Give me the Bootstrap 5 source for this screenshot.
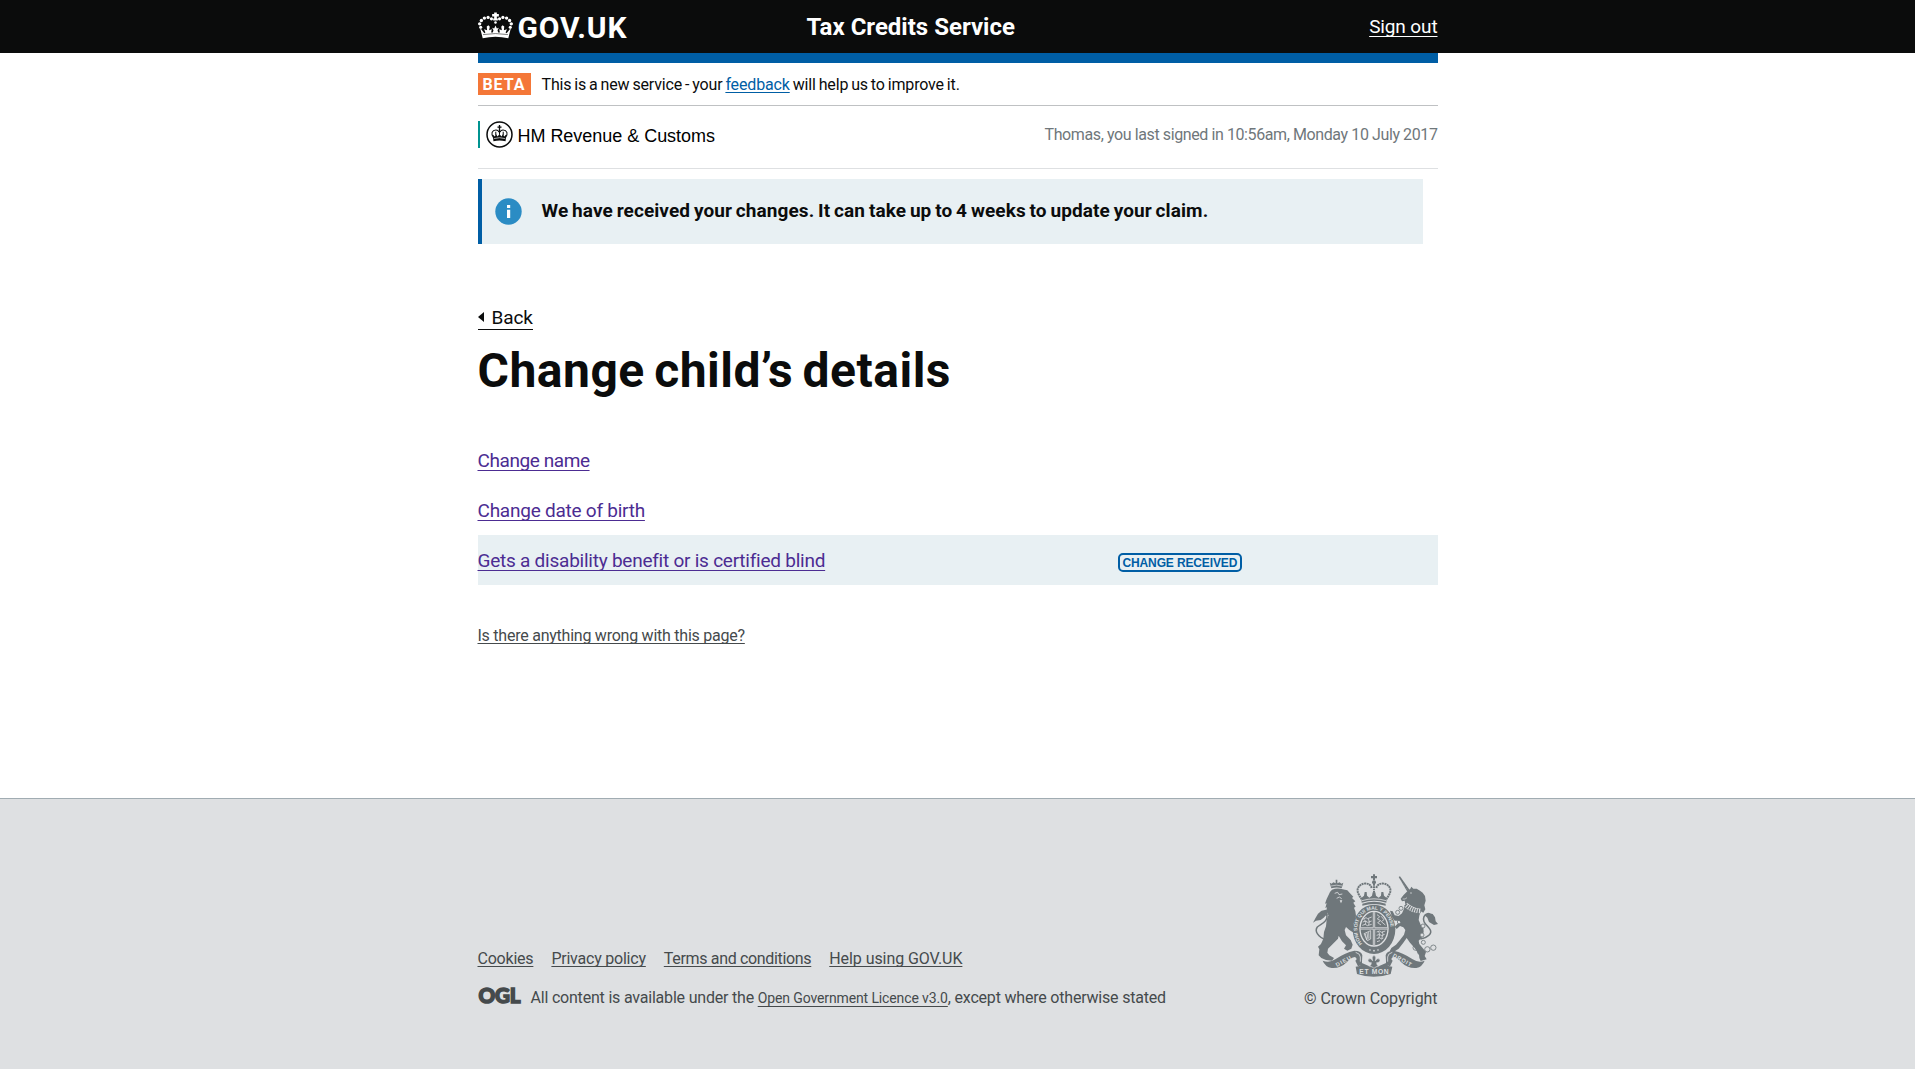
<!DOCTYPE html>
<html lang="en">
<head>
<meta charset="utf-8">
<meta name="viewport" content="width=device-width, initial-scale=1">
<title>Change child’s details – Tax Credits Service</title>
<link href="https://cdn.jsdelivr.net/npm/bootstrap@5.3.0/dist/css/bootstrap.min.css" rel="stylesheet">
<style>
  body { font-family: Roboto, "Liberation Sans", sans-serif; font-size: 16px; color: #0b0c0c; background: #fff; }
  a { text-decoration: underline; text-decoration-thickness: 1px; text-underline-offset: 3px; text-decoration-skip-ink: none; }
  .page-width { width: 960px; }
  .site-header { background: #0b0c0c; color: #fff; height: 53px; line-height: 53px; }
  .brand { width: 329px; gap: 5px; }
  .brand-name { font-size: 30px; font-weight: 700; letter-spacing: .85px; line-height: 56px; height: 53px; }
  .service-name { font-size: 24px; font-weight: 700; line-height: 55px; }
  .sign-out { font-size: 19px; letter-spacing: -.12px; color: #fff; }
  .header-bar { height: 10px; background: #005ea5; }
  .phase-banner { height: 43px; padding-top: 10px; border-bottom: 1px solid #bfc1c3; gap: 11px; }
  .phase-tag { width: 53px; height: 22px; line-height: 23px; background: #f47738; color: #fff; font-weight: 700; letter-spacing: .9px; padding-left: 5px; }
  .phase-text { line-height: 23px; letter-spacing: -.15px; word-spacing: -.9px; }
  .phase-text a { color: #005ea5; text-underline-offset: 2px; }
  .dept-row { height: 63px; padding-top: 15px; border-bottom: 1px solid #dee0e2; }
  .dept { height: 27px; border-left: 2px solid #009390; padding-left: 6px; gap: 5px; }
  .dept-name { font: 18px/31px "Liberation Sans", sans-serif; letter-spacing: -.03px; color: #000; }
  .last-login { line-height: 27px; color: #6f777b; letter-spacing: -.4px; }
  .notice { width: 945px; height: 65px; margin-top: 10px; border-left: 4px solid #005ea5; background: #e8f0f3; padding-left: 13px; gap: 20px; }
  .notice-text { font-size: 19px; line-height: 24px; padding-bottom: 2px; letter-spacing: .09px; word-spacing: -1px; }
  .back-link { margin-top: 64px; font-size: 19px; line-height: 19px; padding-bottom: 2px; border-bottom: 1px solid #0b0c0c; color: #0b0c0c; gap: 8px; letter-spacing: -.1px; }
  .page-title { font-size: 48px; font-weight: 700; line-height: 50px; letter-spacing: .5px; word-spacing: -3px; margin: 16px 0 39px; }
  .change-row { height: 50px; padding-top: 1px; line-height: 49px; font-size: 19px; }
  .change-row a { color: #4c2c92; letter-spacing: -.24px; }
  .change-row a.child-name { letter-spacing: -.42px; }
  .change-row.is-updated { background: #e8f0f3; }
  .change-row .link-cell { width: 640px; }
  .change-tag { height: 19px; margin-top: 17px; padding: 0 3px; width: 124px; border: 2px solid #005ea5; border-radius: 5px; color: #005ea5; font: 700 12px/16px "Liberation Sans", sans-serif; letter-spacing: -.13px; white-space: nowrap; }
  .page-help { margin-top: 38px; line-height: 25px; }
  .page-help a { color: #454a4c; letter-spacing: -.24px; text-underline-offset: 2px; }
  .site-footer { margin-top: 150px; height: 271px; background: #dee0e2; border-top: 1px solid #a1acb2; color: #454a4c; }
  .site-footer a { color: #454a4c; text-underline-offset: 2px; }
  .footer-inner { height: 210px; }
  .footer-links { gap: 18px; line-height: 21px; margin-bottom: 19px; letter-spacing: -.22px; }
  .footer-links .terms { letter-spacing: -.33px; }
  .footer-links .help { letter-spacing: -.07px; }
  .licence { line-height: 20px; gap: 10px; letter-spacing: -.2px; margin-bottom: 1px; }
  .licence a { font-size: 14px; letter-spacing: -.12px; text-underline-offset: 3px; }
  .ogl { margin-top: -1px; }
  .copyright { line-height: 20px; letter-spacing: -.06px; }
  .arms { margin-bottom: 12px; }
  svg { display: block; flex: none; overflow: visible; }
</style>
</head>
<body>
<header class="site-header">
  <div class="page-width mx-auto d-flex">
    <div class="brand d-flex align-items-start">
      <svg class="mt-2 pt-1" style="box-sizing:content-box" width="35" height="27" viewBox="24 38 104 80" fill="#fff">
        <path d="M72 39h8v5h6v7h-6v6h3v6h-14v-6h3v-6h-6v-7h6z"/>
        <g><circle cx="64" cy="58" r="4.8"/><circle cx="54" cy="54" r="4.8"/><circle cx="43" cy="56" r="5"/><circle cx="34" cy="63" r="5"/><circle cx="29" cy="73" r="5"/><circle cx="32" cy="83" r="4.6"/>
        <circle cx="88" cy="58" r="4.8"/><circle cx="98" cy="54" r="4.8"/><circle cx="109" cy="56" r="5"/><circle cx="118" cy="63" r="5"/><circle cx="123" cy="73" r="5"/><circle cx="120" cy="83" r="4.6"/><circle cx="76" cy="69" r="3.8"/></g>
        <path d="M30 85l13 16 3-2-4-10 9 3-1-11 5-4 4 5-2 10 8-3-2 10h5l2-7-4-7 6 2 4-9 4 9 6-2-4 7 2 7h5l-2-10 8 3-2-10 4-5 5 4-1 11 9-3-4 10 3 2 13-16-8 31Q76 107 38 116z"/>
        <path d="M39 105Q76 99 113 105" fill="none" stroke="#0b0c0c" stroke-width="1.6"/>
      </svg>
      <span class="brand-name">GOV.UK</span>
    </div>
    <span class="service-name">Tax Credits Service</span>
    <a class="sign-out ms-auto" href="#">Sign out</a>
  </div>
</header>

<main class="page-width mx-auto">
  <div class="header-bar"></div>
  <div class="phase-banner d-flex">
    <strong class="phase-tag">BETA</strong>
    <span class="phase-text">This is a new service - your <a href="#">feedback</a> will help us to improve it.</span>
  </div>
  <div class="dept-row d-flex justify-content-between align-items-start">
    <div class="dept d-flex align-items-start">
      <svg width="27" height="27" viewBox="47 365 80 80">
        <circle cx="87" cy="405" r="37" fill="#fff" stroke="#0b0c0c" stroke-width="4.5"/>
        <path d="M85 377h4v4h4v4h-4v7h-4v-7h-4v-4h4z" fill="#0b0c0c"/>
        <path d="M85 398c-1-9-16-9-20 1-2 6 1 10 4 15M89 398c1-9 16-9 20 1 2 6-1 10-4 15M87 392v14M76 397v10M98 397v10" fill="none" stroke="#0b0c0c" stroke-width="3"/>
        <path d="M67 405l6 6 4-7 4 7 6-7 6 7 4-7 4 7 6-6-2 20q-18-5-36 0z" fill="#0b0c0c"/>
        <path d="M71 417q16-5 32 0" fill="none" stroke="#fff" stroke-width="2"/>
      </svg>
      <span class="dept-name">HM Revenue &amp; Customs</span>
    </div>
    <span class="last-login">Thomas, you last signed in 10:56am, Monday 10 July 2017</span>
  </div>

  <div class="notice d-flex align-items-center" role="status">
    <svg width="27" height="27" viewBox="0 0 27 27"><circle cx="13.5" cy="13.5" r="13.2" fill="#2b8cc4"/><path d="M12 7h3.2v3H12zM12 11.7h3.2V20H12z" fill="#fff"/></svg>
    <strong class="notice-text">We have received your changes. It can take up to 4 weeks to update your claim.</strong>
  </div>

  <a class="back-link d-inline-flex align-items-start text-decoration-none" href="#">
    <svg width="6" height="15" viewBox="0 0 6 15"><path d="M6 4v10L0 9z" fill="#0b0c0c"/></svg>Back
  </a>
  <h1 class="page-title">Change child’s details</h1>

  <ul class="list-unstyled mb-0">
    <li class="change-row"><a class="child-name" href="#">Change name</a></li>
    <li class="change-row"><a href="#">Change date of birth</a></li>
    <li class="change-row is-updated d-flex">
      <div class="link-cell"><a href="#">Gets a disability benefit or is certified blind</a></div>
      <span class="change-tag">CHANGE RECEIVED</span>
    </li>
  </ul>
  <div class="page-help"><a href="#">Is there anything wrong with this page?</a></div>
</main>

<footer class="site-footer">
  <div class="page-width mx-auto footer-inner d-flex justify-content-between align-items-end">
    <div>
      <div class="footer-links d-flex">
        <a href="#">Cookies</a><a href="#">Privacy policy</a><a class="terms" href="#">Terms and conditions</a><a class="help" href="#">Help using GOV.UK</a>
      </div>
      <div class="licence d-flex">
        <svg class="ogl" width="43" height="18" viewBox="0 0 43 18"><text x="0.6" y="16.3" textLength="41.8" lengthAdjust="spacingAndGlyphs" font-family="Lato" font-weight="900" font-size="21.5" fill="#454a4c" stroke="#454a4c" stroke-width="1.5">OGL</text></svg>
        <span>All content is available under the <a href="#">Open Government Licence v3.0</a>, except where otherwise stated</span>
      </div>
    </div>
    <div class="d-flex flex-column align-items-end">
      <svg class="arms" width="125" height="103" viewBox="69 40 375 309" fill="#6f777b">
        <!-- royal crown -->
        <path d="M249 41h6v5h6v7h-6v6h-6v-6h-6v-7h6z"/><circle cx="252" cy="65" r="6"/>
        <g fill="none" stroke="#6f777b" stroke-width="6">
          <path d="M245 82C241 63 208 64 203 86c-2 10 6 20 12 30M259 82c4-19 37-18 42 4 2 10-6 20-12 30" stroke-dasharray="6 1.6"/>
          <path d="M252 70v42" stroke-dasharray="5 2"/>
        </g>
        <path d="M214 112l8-7 2-11 6 0 1 11 7 6 8-6 2-10h8l2 10 8 6 7-6 1-11h6l2 11 8 7-1 14q-36-11-74 0z"/>
        <path d="M216 120q36-11 72 0" fill="none" stroke="#dee0e2" stroke-width="2.5"/>
        <path d="M217 129q35-12 70 0v6q-35-10-70 0z"/>
        <!-- garter and quartered shield -->
        <ellipse cx="252" cy="206" rx="64" ry="74"/>
        <ellipse cx="252" cy="204" rx="44" ry="54" fill="#dee0e2"/>
        <ellipse cx="252" cy="204" rx="40" ry="50"/>
        <path d="M252 154v100M212 203h80" stroke="#dee0e2" stroke-width="7"/>
        <path d="M252 154v100M212 203h80" stroke="#6f777b" stroke-width="2"/>
        <g fill="none" stroke="#dee0e2" stroke-width="2.4">
          <path d="M220 175l8-4 5 3 12-5M218 184l10-3 5 4 12-4M217 194l9-3 6 4 13-4M222 176l6 8-3 8M235 174l3 9-2 10M261 162l8 6-7 7 10 5-9 6 10 7M274 167l8 10-8 6 12 10"/>
          <path d="M222 219l20-9v25l-10 5zM226 219l4 19M231 216l3 20M236 214l1 20M260 214l9-3 5 4 12-4M260 224l9-3 5 4 10-4M260 234l9-3 5 4 6-3M261 243l9-3M266 212l3 10-3 12M277 213l2 8-4 13"/>
        </g>
        <path id="garter-line" d="M217 249A49 59 0 0 1 252 147A49 59 0 0 1 287 249" fill="none"/>
        <!-- lion -->
        <path d="M124 83l-5-17 6 3 5-4 7 3V57h5v11l7-3 5 4 6-3-5 17q-14-5-31 0z"/>
        <path d="M123 76q16-5 33 0" stroke="#dee0e2" stroke-width="2" fill="none"/>
        <path d="M120 94l6-7q16-6 32-1l14 3 8 9 10 10-4 4 10 10-6 4 7 12-5 3 4 11 2 13-2 14-6 10 1 16 7 4-6 8-14-9-10-9-4 9 4 16 14 14 6 14-4 12-12 6-10-6 6-10-12-12-10-17-2 9-18 18-12 12-2 12 6 8 14 8-6 8-18-2-14-6-8-8 2-18-4-8 9-8 7-16 2-20 6-17 2-20 6-15-4 2 2-12-6 2 3-14-5 2 4-14-5 1 5-14z"/>
        <path d="M134 98l9-3 4 7 10-2M140 113l8-4 7 5" stroke="#dee0e2" stroke-width="2.5" fill="none"/><path d="M149 119l4 9 4-9z" fill="#dee0e2"/>
        <path d="M110 239C83 229 73 211 82 199c10-9 29-14 29-31 0-13-10-19-19-12-4 4 0 10 5 11" fill="none" stroke="#6f777b" stroke-width="4.5"/>
        <path d="M69 186l8-15 7-12 11-9 13-3 8 5-5 9-10 10-9 7-14 2z"/>
        <!-- unicorn -->
        <path d="M326 49l4-2 29 41-7 5z"/><path d="M331 58l22 30" stroke="#dee0e2" stroke-width="1" stroke-dasharray="2 4"/>
        <path d="M352 92L361 84 364 78 370 84 380 84 390 90 398 96 405 106 407 120 403 134 406 146 400 156 392 152 388 165 386 178 392 192 400 200 401 214 396 230 386 240 388 250 398 262 408 274 404 286 410 296 392 301 388 292 387 282 374 262 360 246 350 232 340 246 326 264 312 273 299 272 304 262 318 252 330 238 342 222 346 208 340 200 330 196 320 205 314 198 322 190 332 187 328 180 314 180 306 168 300 150 308 152 314 164 326 166 336 158 342 144 346 130 344 120 336 122 332 114 340 104z"/>
        <circle cx="363" cy="97" r="2" fill="#dee0e2"/><path d="M338 115q8 2 13-4" stroke="#dee0e2" stroke-width="2" fill="none"/>
        <path d="M346 132q20 19 46 20" fill="none" stroke="#dee0e2" stroke-width="15"/>
        <path d="M346 132q20 19 46 20" fill="none" stroke="#6f777b" stroke-width="12" stroke-dasharray="4 3"/>
        <path d="M343 140q20 19 46 19" fill="none" stroke="#6f777b" stroke-width="3"/>
        <path d="M391 235c22-4 37-16 29-29-9-13-25-22-18-38 5-10 17-13 20-3" fill="none" stroke="#6f777b" stroke-width="4.5"/>
        <path d="M403 163l11-6 14 3 7 10 2 12 7 8-12 3-15-9-5-13z"/>
        <g fill="none" stroke="#6f777b" stroke-width="2.5"><circle cx="333" cy="143" r="6"/><circle cx="323" cy="155" r="6"/><circle cx="328" cy="184" r="6"/><circle cx="377" cy="261" r="8"/><circle cx="391" cy="274" r="8"/><circle cx="412" cy="266" r="8"/><circle cx="430" cy="261" r="8"/></g>
        <g fill="#dee0e2" stroke="#6f777b" stroke-width="2.5"><circle cx="399" cy="196" r="6"/><circle cx="396" cy="223" r="6"/><circle cx="400" cy="245" r="6"/></g>
        <!-- garter motto -->
        <text font-family="Liberation Sans" font-weight="700" font-size="15" fill="#dee0e2"><textPath href="#garter-line">HONI SOIT QUI MAL Y PENSE</textPath></text>
        <circle cx="240" cy="268" r="2.5" fill="#dee0e2"/><circle cx="252" cy="270" r="2.5" fill="#dee0e2"/><circle cx="264" cy="268" r="2.5" fill="#dee0e2"/>
        <!-- ribbon -->
        <path d="M98 300q20 8 38-4 28-20 57-26 22 0 24 14l-1 18q2 12-12 15l-8-17q8-5-1-11-13 2-24 15-20 20-46 18-20-4-27-22zM404 300q-18 8-36-4-28-20-57-26-22 0-24 14l1 18q-2 12 12 15l8-17q-8-5 1-11 13 2 24 15 20 20 46 18 18-4 25-22z"/>
        <path d="M197 318l9-1q7-2 8-11 38 22 76 0 1 9 8 11l9 1-5 22q-51 17-101 0z"/>
        <path d="M197 275q14 4 14 14v14M307 275q-14 4-14 14v14" fill="none" stroke="#dee0e2" stroke-width="2.5"/>
        <path d="M252 282q9 9 4 18 6-9 13-5 4 9-7 11h-2q0 7 6 11-9 0-14 6-5-6-14-6 6-4 6-11h-2q-11-2-7-11 7-4 13 5-5-9 4-18z" stroke="#dee0e2" stroke-width="2"/>
        <g font-family="Liberation Sans" font-weight="700" font-size="20" fill="#dee0e2">
          <text transform="translate(141 319) rotate(-29)" textLength="50" font-size="17">DIEU</text>
          <text x="208" y="341" textLength="88">ET MON</text>
          <text transform="translate(307 288) rotate(29)" textLength="62" font-size="17">DROIT</text>
        </g>
      </svg>
      <span class="copyright">© Crown Copyright</span>
    </div>
  </div>
</footer>
<script src="https://cdn.jsdelivr.net/npm/bootstrap@5.3.0/dist/js/bootstrap.bundle.min.js"></script>
</body>
</html>
